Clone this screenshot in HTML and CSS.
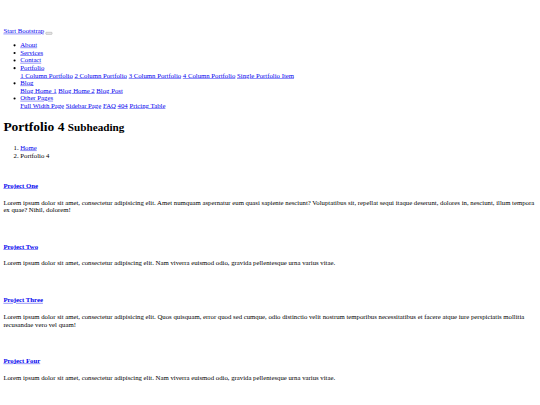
FILE: index.html
```html
<!DOCTYPE html>
<html lang="en">
<head>
<meta charset="utf-8">
<title>Portfolio 4</title>
<link rel="stylesheet" href="styles.css">
</head>
<body>
<div class="page">
<nav class="navbar">
  <div class="navbar-header"><a class="brand" href="#">Start Bootstrap</a> <button class="toggle" type="button"></button></div>
  <ul class="menu">
    <li><a href="#">About</a></li>
    <li><a href="#">Services</a></li>
    <li><a href="#">Contact</a></li>
    <li><a href="#">Portfolio</a>
      <div class="submenu"><a href="#">1 Column Portfolio</a> <a href="#">2 Column Portfolio</a> <a href="#">3 Column Portfolio</a> <a href="#">4 Column Portfolio</a> <a href="#">Single Portfolio Item</a></div>
    </li>
    <li><a href="#">Blog</a>
      <div class="submenu"><a href="#">Blog Home 1</a> <a href="#">Blog Home 2</a> <a href="#">Blog Post</a></div>
    </li>
    <li><a href="#">Other Pages</a>
      <div class="submenu"><a href="#">Full Width Page</a> <a href="#">Sidebar Page</a> <a href="#">FAQ</a> <a href="#">404</a> <a href="#">Pricing Table</a></div>
    </li>
  </ul>
</nav>
<main class="container">
  <h1 class="page-header">Portfolio 4 <small>Subheading</small></h1>
  <ol class="breadcrumb">
    <li><a href="#">Home</a></li>
    <li>Portfolio 4</li>
  </ol>
  <div class="items">
    <div class="item">
      <div class="thumb"></div>
      <h3><a href="#">Project One</a></h3>
      <p>Lorem ipsum dolor sit amet, consectetur adipisicing elit. Amet numquam aspernatur eum quasi sapiente nesciunt? Voluptatibus sit, repellat sequi itaque deserunt, dolores in, nesciunt, illum tempora ex quae? Nihil, dolorem!</p>
    </div>
    <div class="item">
      <div class="thumb"></div>
      <h3><a href="#">Project Two</a></h3>
      <p>Lorem ipsum dolor sit amet, consectetur adipiscing elit. Nam viverra euismod odio, gravida pellentesque urna varius vitae.</p>
    </div>
    <div class="item">
      <div class="thumb"></div>
      <h3><a href="#">Project Three</a></h3>
      <p>Lorem ipsum dolor sit amet, consectetur adipisicing elit. Quos quisquam, error quod sed cumque, odio distinctio velit nostrum temporibus necessitatibus et facere atque iure perspiciatis mollitia recusandae vero vel quam!</p>
    </div>
    <div class="item">
      <div class="thumb"></div>
      <h3><a href="#">Project Four</a></h3>
      <p>Lorem ipsum dolor sit amet, consectetur adipiscing elit. Nam viverra euismod odio, gravida pellentesque urna varius vitae.</p>
    </div>
  </div>
</main>
</div>
</body>
</html>
```
FILE: styles.css
```css
html {
  background: #fff;
}
body {
  margin: 0;
  overflow: hidden;
}
.page {
  width: 1264px;
  padding: 0 8px;
  transform: scale(0.421875);
  transform-origin: 0 0;
  font-family: "Liberation Serif", "Times New Roman", serif;
  font-size: 16px;
  line-height: 18px;
  color: #000;
}
a {
  color: #0000ee;
}
.navbar {
  padding-top: 65.2px;
}
.toggle {
  display: inline-block;
  width: 16px;
  height: 6px;
  padding: 0;
  margin: 0;
  border: 1px solid #9a9a9a;
  border-radius: 2px;
  background: #e6e6e6;
  vertical-align: -2px;
}
.menu {
  margin: 15.2px 0 0;
  padding-left: 40px;
}
.page-header {
  font-size: 32px;
  line-height: 36px;
  font-weight: bold;
  margin: 21.8px 0 0;
}
.page-header small {
  font-size: 26.5px;
}
.breadcrumb {
  margin: 21.7px 0 15.6px;
  padding-left: 40px;
}
.thumb {
  height: 38.4px;
}
.item h3 {
  font-size: 16px;
  line-height: 18px;
  font-weight: bold;
  margin: 0;
}
.item p {
  margin: 21.1px 0 31px;
}
```
